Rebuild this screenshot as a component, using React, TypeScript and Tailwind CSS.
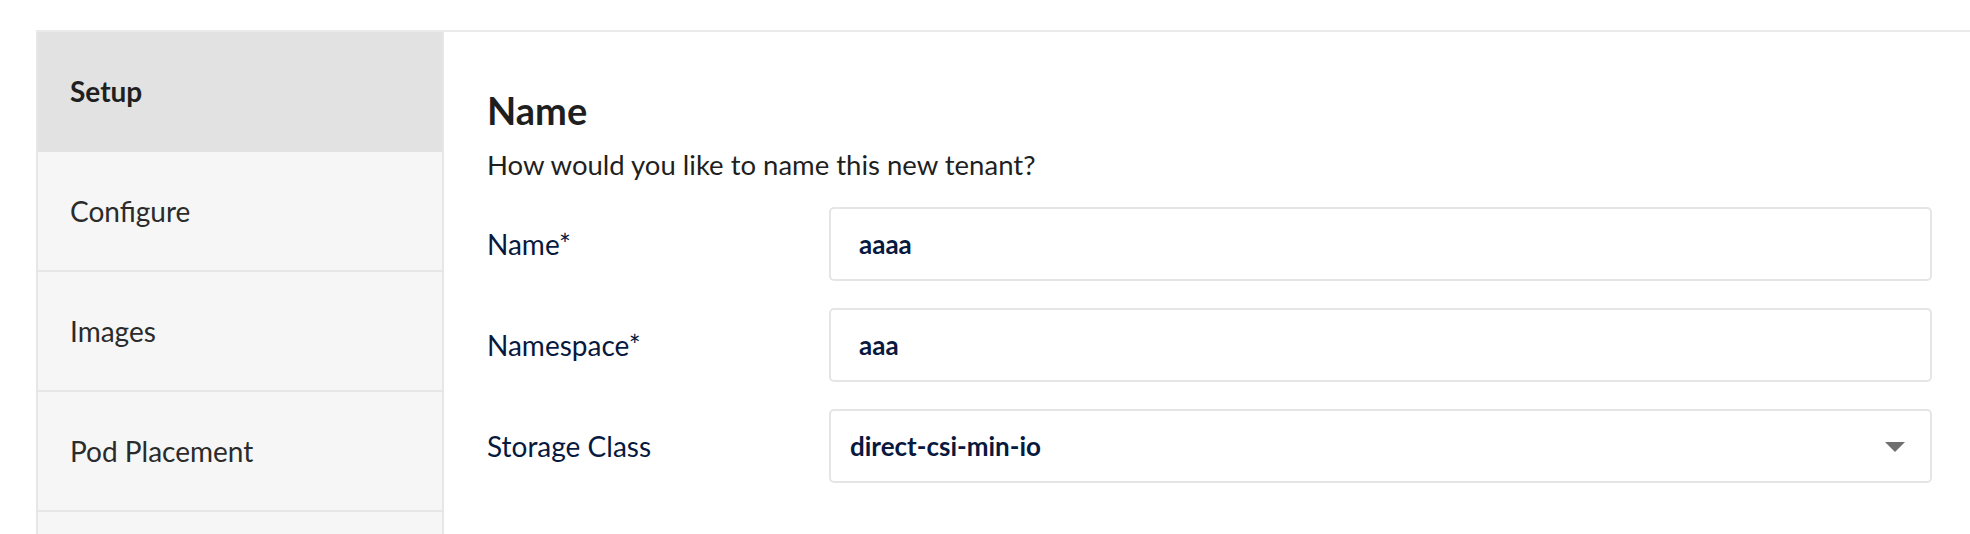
import { useState } from 'react'

const steps = ['Setup', 'Configure', 'Images', 'Pod Placement', '']

function TextRow({ label, value }: { label: string; value: string }) {
	return (
		<div className="flex items-center">
			<label className="w-[342px] shrink-0 text-[28px] text-[#07193e] leading-[34px]">{label}</label>
			<div className="flex h-[74px] flex-1 items-center rounded-[5px] border-2 border-[#e5e5e5] bg-white pl-[28px]">
				<span className="font-bold text-[26px] text-[#07193e]">{value}</span>
			</div>
		</div>
	)
}

export default function App() {
	const [active] = useState(0)

	return (
		<div
			className="h-[534px] w-full overflow-hidden bg-white pt-[30px] pl-[36px]"
			style={{ fontFamily: 'Lato, "Noto Sans", sans-serif' }}
		>
			<div className="flex border-t-2 border-[#eaeaea]">
				<nav className="w-[408px] shrink-0 border-x-2 border-[#e6e6e6] bg-[#f6f6f6]">
					{steps.map((step, i) => (
						<div
							key={i}
							className={
								i === active
									? 'flex h-[120px] items-center border-b-2 border-[#e2e2e2] bg-[#e2e2e2] pl-[32px] font-bold text-[28px] text-[#1f1f1f]'
									: 'flex h-[120px] items-center border-b-2 border-[#e6e6e6] pl-[32px] text-[28px] text-[#2b2b2b]'
							}
						>
							{step}
						</div>
					))}
				</nav>

				<main className="flex-1 pt-[58px] pr-[38px] pl-[43px]">
					<h2 className="font-bold text-[38px] text-[#1f1f1f] leading-[40px]">Name</h2>
					<p className="mt-[20px] text-[27.5px] text-[#1f1f1f] leading-[30px]">
						How would you like to name this new tenant?
					</p>

					<div className="mt-[27px] flex flex-col gap-[27px]">
						<TextRow label="Name*" value="aaaa" />
						<TextRow label="Namespace*" value="aaa" />
						<div className="flex items-center">
							<label className="w-[342px] shrink-0 text-[28px] text-[#07193e] leading-[34px]">Storage Class</label>
							<div className="flex h-[74px] flex-1 items-center justify-between rounded-[5px] border-2 border-[#e5e5e5] bg-white pr-[25px] pl-[19px]">
								<span className="font-bold text-[26px] text-[#07193e]">direct-csi-min-io</span>
								<svg width="20" height="10" viewBox="0 0 20 10" className="mt-[2px]">
									<path d="M0 0 H20 L10 10 Z" fill="#6f6f6f" />
								</svg>
							</div>
						</div>
					</div>
				</main>
			</div>
		</div>
	)
}
